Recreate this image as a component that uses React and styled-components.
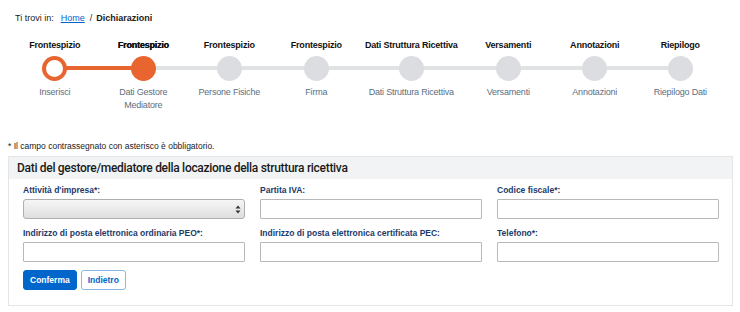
import styled, { createGlobalStyle } from "styled-components";

const GlobalStyle = createGlobalStyle`
  * { box-sizing: border-box; }
  body {
    margin: 0;
    background: #fff;
    font-family: "Liberation Sans", Arial, sans-serif;
    color: #1a1a1a;
  }
`;

const Page = styled.div`
  width: 740px;
  height: 312px;
  padding: 11px 7px 0 8px;
  overflow: hidden;
`;

const Breadcrumb = styled.nav`
  display: flex;
  align-items: center;
  font-size: 9px;
  padding-left: 7px;
  height: 14px;
  a {
    color: #0066cc;
    text-decoration: underline;
    margin: 0 5px 0 7px;
  }
  strong {
    font-weight: 700;
    margin-left: 4px;
  }
`;

const Steps = styled.ol`
  list-style: none;
  margin: 14px 0 0;
  padding: 0 6px 0 3px;
  display: grid;
  grid-template-columns: 88fr 90fr 83fr 92fr 99fr 96fr 78fr 94fr;
  height: 101px;
`;

const Step = styled.li`
  display: flex;
  flex-direction: column;
  align-items: center;
  text-align: center;
`;

const StepTitle = styled.div`
  font-size: 9px;
  letter-spacing: -0.2px;
  font-weight: 700;
  color: #111;
  text-shadow: ${(p) => (p.$current ? "0.35px 0 0 #000" : "none")};
  height: 12px;
  line-height: 12px;
  white-space: nowrap;
`;

const Track = styled.div`
  position: relative;
  width: 100%;
  height: 25px;
  margin-top: 5px;
  display: flex;
  justify-content: center;
  &::after {
    content: "";
    display: ${(p) => (p.$last ? "none" : "block")};
    position: absolute;
    left: 50%;
    right: -50%;
    top: 10px;
    height: 4px;
    background: ${(p) => (p.$done ? "#e8652f" : "#e1e2e4")};
  }
`;

const Dot = styled.span`
  position: relative;
  z-index: 1;
  width: 25px;
  height: 25px;
  border-radius: 50%;
  background: ${(p) => (p.$state === "done" ? "#fff" : p.$state === "current" ? "#e8652f" : "#dcdde0")};
  border: ${(p) => (p.$state === "done" ? "4px solid #e8652f" : "none")};
`;

const StepLabel = styled.div`
  margin-top: 5px;
  font-size: 9px;
  letter-spacing: -0.2px;
  line-height: 13px;
  color: #5c6f82;
  max-width: ${(p) => (p.$wide ? "none" : "60px")};
`;

const Note = styled.p`
  margin: 0;
  font-size: 8.5px;
  line-height: 12px;
  color: #1a1a1a;
`;

const Panel = styled.section`
  margin-top: 4px;
  border: 1.5px solid #e4e5e7;
  height: 150px;
`;

const PanelHeader = styled.h2`
  margin: 0;
  height: 22px;
  background: #f2f3f4;
  padding: 0 8px;
  font-family: Roboto, "Liberation Sans", sans-serif;
  font-size: 12px;
  font-weight: 500;
  letter-spacing: -0.3px;
  line-height: 22px;
  color: #1a1a1a;
`;

const Form = styled.form`
  padding: 6px 13px 0 14px;
`;

const Grid = styled.div`
  display: grid;
  grid-template-columns: repeat(3, 1fr);
  column-gap: 15px;
  row-gap: 9px;
`;

const Field = styled.label`
  display: flex;
  flex-direction: column;
  gap: 3px;
`;

const LabelText = styled.span`
  font-size: 8.5px;
  font-weight: 700;
  color: #1b3a6b;
  line-height: 11px;
`;

const Input = styled.input`
  height: 20px;
  border: 1px solid #b8b8b8;
  border-radius: 1px;
  background: #fff;
  padding: 0 4px;
  font: inherit;
`;

const Select = styled.div`
  position: relative;
  height: 20px;
  border: 1px solid #aeaeae;
  border-radius: 3px;
  background: linear-gradient(#f6f6f6, #dedede);
`;

const Arrows = styled.svg`
  position: absolute;
  right: 3px;
  top: 5px;
`;

const Actions = styled.div`
  display: flex;
  gap: 4px;
  margin-top: 8px;
`;

const Button = styled.button`
  height: 20px;
  padding: 0 6px;
  font-family: "Liberation Sans", Arial, sans-serif;
  font-size: 8.5px;
  font-weight: 700;
  border-radius: 3px;
  border: 1px solid ${(p) => (p.$primary ? "#0066cc" : "#8ab8e6")};
  background: ${(p) => (p.$primary ? "#0066cc" : "#fff")};
  color: ${(p) => (p.$primary ? "#fff" : "#0066cc")};
`;

const steps = [
  { title: "Frontespizio", label: "Inserisci", state: "done" },
  { title: "Frontespizio", label: "Dati Gestore Mediatore", state: "current" },
  { title: "Frontespizio", label: "Persone Fisiche", wide: true },
  { title: "Frontespizio", label: "Firma" },
  { title: "Dati Struttura Ricettiva", label: "Dati Struttura Ricettiva", wide: true },
  { title: "Versamenti", label: "Versamenti" },
  { title: "Annotazioni", label: "Annotazioni" },
  { title: "Riepilogo", label: "Riepilogo Dati", wide: true },
];

const fields = [
  { label: "Attività d'impresa*:", select: true },
  { label: "Partita IVA:" },
  { label: "Codice fiscale*:" },
  { label: "Indirizzo di posta elettronica ordinaria PEO*:" },
  { label: "Indirizzo di posta elettronica certificata PEC:" },
  { label: "Telefono*:" },
];

export default function App() {
  return (
    <Page>
      <GlobalStyle />
      <Breadcrumb>
        <span>Ti trovi in:</span>
        <a href="#">Home</a>
        <span>/</span>
        <strong>Dichiarazioni</strong>
      </Breadcrumb>

      <Steps>
        {steps.map((s, i) => (
          <Step key={i}>
            <StepTitle $current={s.state === "current"}>{s.title}</StepTitle>
            <Track $done={s.state === "done"} $last={i === steps.length - 1}>
              <Dot $state={s.state} />
            </Track>
            <StepLabel $wide={s.wide}>{s.label}</StepLabel>
          </Step>
        ))}
      </Steps>

      <Note>* Il campo contrassegnato con asterisco è obbligatorio.</Note>

      <Panel>
        <PanelHeader>Dati del gestore/mediatore della locazione della struttura ricettiva</PanelHeader>
        <Form onSubmit={(e) => e.preventDefault()}>
          <Grid>
            {fields.map((f) => (
              <Field key={f.label}>
                <LabelText>{f.label}</LabelText>
                {f.select ? (
                  <Select>
                    <Arrows width="6" height="9" viewBox="0 0 6 9">
                      <path d="M3 0.5L5.5 3.5H0.5Z M3 8.5L0.5 5.5H5.5Z" fill="#333" />
                    </Arrows>
                  </Select>
                ) : (
                  <Input type="text" />
                )}
              </Field>
            ))}
          </Grid>
          <Actions>
            <Button type="submit" $primary>Conferma</Button>
            <Button type="button">Indietro</Button>
          </Actions>
        </Form>
      </Panel>
    </Page>
  );
}
